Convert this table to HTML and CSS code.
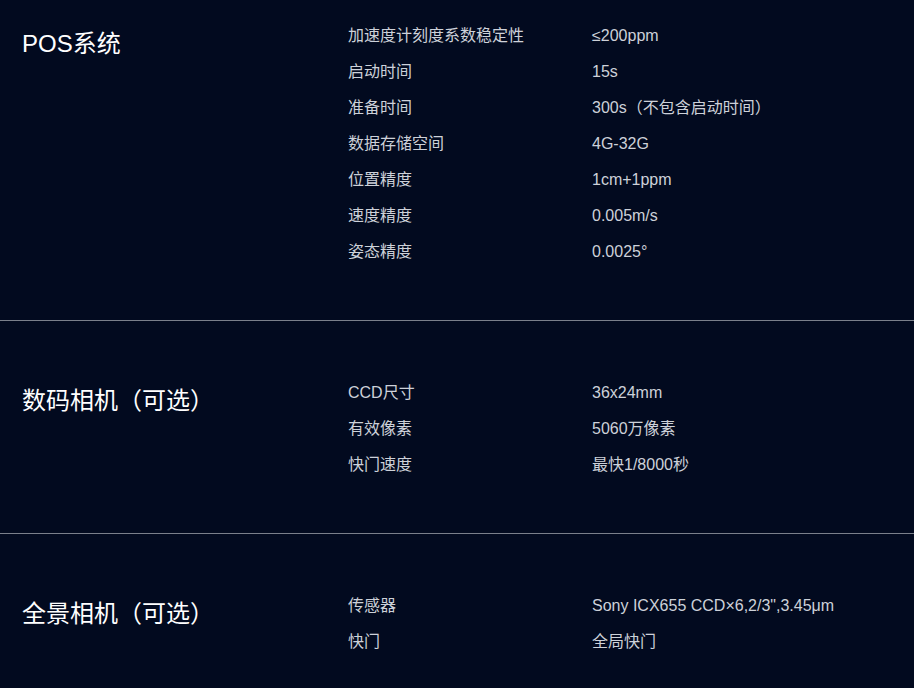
FILE: index.html
```html
<!DOCTYPE html>
<html lang="zh">
<head>
<meta charset="utf-8">
<title>参数</title>
<link rel="stylesheet" href="styles.css">
</head>
<body>
<div class="specs">
  <section class="spec spec-first">
    <h2 class="spec-title">POS系统</h2>
    <dl class="spec-list">
      <dt>加速度计刻度系数稳定性</dt><dd>≤200ppm</dd>
      <dt>启动时间</dt><dd>15s</dd>
      <dt>准备时间</dt><dd>300s（不包含启动时间）</dd>
      <dt>数据存储空间</dt><dd>4G-32G</dd>
      <dt>位置精度</dt><dd>1cm+1ppm</dd>
      <dt>速度精度</dt><dd>0.005m/s</dd>
      <dt>姿态精度</dt><dd>0.0025°</dd>
    </dl>
  </section>
  <section class="spec">
    <h2 class="spec-title">数码相机（可选）</h2>
    <dl class="spec-list">
      <dt>CCD尺寸</dt><dd>36x24mm</dd>
      <dt>有效像素</dt><dd>5060万像素</dd>
      <dt>快门速度</dt><dd>最快1/8000秒</dd>
    </dl>
  </section>
  <section class="spec">
    <h2 class="spec-title">全景相机（可选）</h2>
    <dl class="spec-list">
      <dt>传感器</dt><dd>Sony ICX655 CCD×6,2/3",3.45μm</dd>
      <dt>快门</dt><dd>全局快门</dd>
    </dl>
  </section>
</div>
</body>
</html>
```
FILE: styles.css
```css
html, body {
  margin: 0;
  padding: 0;
  background: #020a1f;
}
body {
  font-family: "Liberation Sans", "Noto Sans CJK SC", sans-serif;
  color: #cdd1d9;
  width: 914px;
  height: 688px;
  overflow: hidden;
}
.spec {
  display: flex;
  padding: 54px 0 50px 22px;
  border-bottom: 1px solid #7b808b;
}
.spec-first {
  padding-top: 18px;
}
.spec-title {
  width: 326px;
  margin: 0;
  padding-top: 8px;
  font-size: 24px;
  line-height: 36px;
  font-weight: normal;
  color: #ffffff;
  flex-shrink: 0;
}
.spec-list {
  display: grid;
  grid-template-columns: 244px auto;
  margin: 0;
  font-size: 16px;
  line-height: 36px;
}
.spec-list dt, .spec-list dd {
  margin: 0;
}
```
